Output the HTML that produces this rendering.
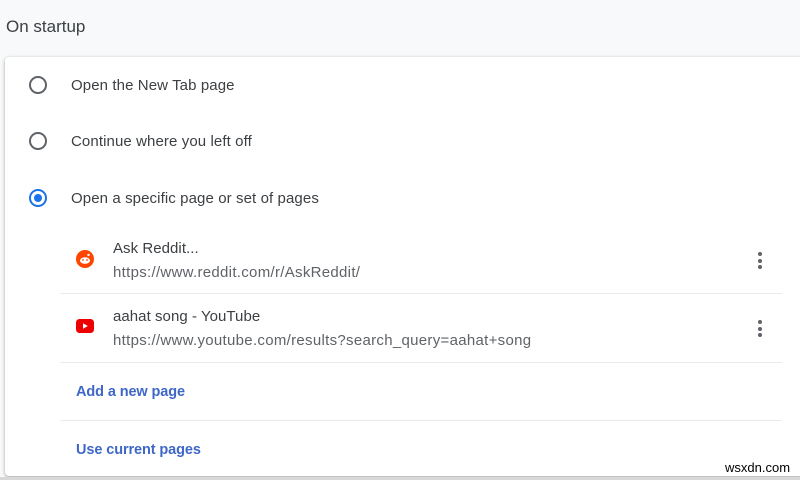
<!DOCTYPE html>
<html><head><style>
body{margin:0;width:800px;height:480px;background:#f8f9fa;font-family:"Liberation Sans",sans-serif;position:relative;overflow:hidden;color:#202124}
.a{position:absolute;white-space:nowrap}
.card{position:absolute;left:5px;top:57px;width:800px;height:419px;background:#fff;border-radius:4px;box-shadow:0 1px 2px rgba(60,64,67,.3),0 1px 3px 1px rgba(60,64,67,.15)}
.r{position:absolute;width:14px;height:14px;border:2px solid #5f6368;border-radius:50%;left:29px}
.opt{font-size:15px;color:#3c4043;left:71px;letter-spacing:.1px}
.t{font-size:15px;color:#3c4043;left:113px;letter-spacing:.05px}
.u{font-size:15px;color:#5f6368;left:113px;letter-spacing:.3px}
.hr{position:absolute;left:60px;width:722px;height:1px;background:#e8eaed}
.dots{position:absolute;left:758px;width:4px}
.dots i{display:block;width:4px;height:4px;border-radius:50%;background:#5f6368;margin-bottom:2.5px}
.lnk{font-size:14.5px;color:#3f67c8;font-weight:bold;left:76px;letter-spacing:-.1px}
</style></head><body>
<div class="a" style="left:6px;top:17px;font-size:17px;color:#3c4043">On startup</div>
<div class="card"></div>
<div class="r" style="top:76px"></div>
<div class="a opt" style="top:77px">Open the New Tab page</div>
<div class="r" style="top:132px"></div>
<div class="a opt" style="top:133px">Continue where you left off</div>
<div class="r" style="top:189px;border-color:#1a73e8"><div style="position:absolute;left:3px;top:3px;width:8px;height:8px;border-radius:50%;background:#1a73e8"></div></div>
<div class="a opt" style="top:190px">Open a specific page or set of pages</div>

<svg class="a" style="left:76px;top:250px" width="18" height="18" viewBox="0 0 18 18"><circle cx="9" cy="9" r="9" fill="#ff4500"/><ellipse cx="9" cy="10.5" rx="5" ry="3.3" fill="#fff"/><circle cx="12.5" cy="5" r="1.2" fill="#fff"/><circle cx="7" cy="10" r=".9" fill="#ff4500"/><circle cx="11" cy="10" r=".9" fill="#ff4500"/></svg>
<div class="a t" style="top:240px">Ask Reddit...</div>
<div class="a u" style="top:264px">https://www.reddit.com/r/AskReddit/</div>
<div class="dots" style="top:252px"><i></i><i></i><i></i></div>
<div class="hr" style="top:293px"></div>

<svg class="a" style="left:76px;top:319px" width="18" height="14" viewBox="0 0 18 14"><rect width="18" height="14" rx="3.5" fill="#e00"/><path d="M7 4.2v5.6l4.8-2.8z" fill="#fff"/></svg>
<div class="a t" style="top:308px">aahat song - YouTube</div>
<div class="a u" style="top:332px">https://www.youtube.com/results?search_query=aahat+song</div>
<div class="dots" style="top:320px"><i></i><i></i><i></i></div>
<div class="hr" style="top:362px"></div>

<div class="a lnk" style="top:384px">Add a new page</div>
<div class="hr" style="top:420px"></div>
<div class="a lnk" style="top:442px">Use current pages</div>
<div class="a" style="left:725px;top:460px;font-size:13px;color:#000">wsxdn.com</div>
<div class="a" style="left:0;top:477px;width:800px;height:3px;background:#d8d8d8"></div>
</body></html>
